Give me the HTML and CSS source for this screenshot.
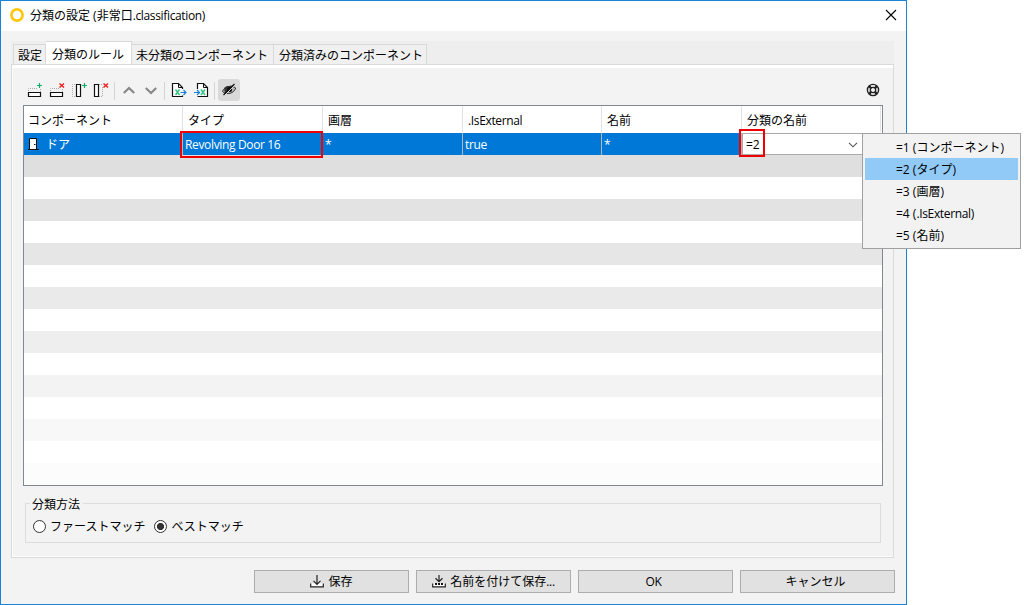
FILE: index.html
```html
<!DOCTYPE html>
<html lang="ja">
  <head>
    <meta charset="UTF-8" />
    <meta name="viewport" content="width=device-width, initial-scale=1.0" />
    <title>分類の設定</title>
    <link rel="stylesheet" href="styles.css">
  </head>
  <body>
    <div class="dialog">
      <div class="titlebar">
        <svg class="logo" width="14" height="14" viewBox="0 0 14 14"><circle cx="7" cy="7" r="5.6" fill="none" stroke="#fdc70c" stroke-width="2.6" /></svg>
        <span class="title">分類の設定 (非常口<span class="latin">.classification)</span></span>
        <svg class="close" width="12" height="12" viewBox="0 0 12 12"><path d="M1 1l10 10M11 1L1 11" stroke="#000" stroke-width="1.1" /></svg>
      </div>

      <div class="tabs">
        <div class="tab tab-first">設定</div>
        <div class="tab active">分類のルール</div>
        <div class="tab tab-unclassified">未分類のコンポーネント</div>
        <div class="tab tab-classified">分類済みのコンポーネント</div>
      </div>

      <div class="panel">
        <div class="toolbar">
          <!-- 行の追加・削除 -->
          <svg class="tool" viewBox="0 0 22 22">
            <path d="M4.5 12V9.5H13M16.5 10v3" fill="none" stroke="#aaa" stroke-dasharray="1 1" />
            <path d="M4.5 13.5h12v4h-12z" fill="#fff" stroke="#111" stroke-width="1.2" />
            <path d="M13 6.5h5M15.5 4v5" stroke="#0fae68" stroke-width="1.2" />
          </svg>
          <svg class="tool" viewBox="0 0 22 22">
            <path d="M4.5 12V9.5H13M16.5 10v3" fill="none" stroke="#aaa" stroke-dasharray="1 1" />
            <path d="M4.5 13.5h12v4h-12z" fill="#fff" stroke="#111" stroke-width="1.2" />
            <path d="M13.5 4.5l4.5 4M18 4.5l-4.5 4" stroke="#f01c1c" stroke-width="1.4" />
          </svg>
          <!-- 列の追加・削除 -->
          <svg class="tool" viewBox="0 0 22 22">
            <path d="M7 5.5H4.5V17.5H7" fill="none" stroke="#aaa" stroke-dasharray="1 1" />
            <path d="M8.5 5.5h4v12h-4z" fill="#fff" stroke="#111" stroke-width="1.2" />
            <path d="M14 6.5h5M16.5 4v5" stroke="#0fae68" stroke-width="1.2" />
          </svg>
          <svg class="tool" viewBox="0 0 22 22">
            <path d="M9 5.5h4M12.5 8V17.5H9" fill="none" stroke="#aaa" stroke-dasharray="1 1" />
            <path d="M4.5 5.5h4v12h-4z" fill="#fff" stroke="#111" stroke-width="1.2" />
            <path d="M13.5 4.5l4.5 4M18 4.5l-4.5 4" stroke="#f01c1c" stroke-width="1.4" />
          </svg>
          <span class="sep"></span>
          <svg class="tool" viewBox="0 0 22 22"><path d="M5.8 14l5.200-5 5.200 5" fill="none" stroke="#888" stroke-width="2.2" /></svg>
          <svg class="tool" viewBox="0 0 22 22"><path d="M5.8 9l5.200 5 5.200-5" fill="none" stroke="#888" stroke-width="2.2" /></svg>
          <span class="sep"></span>
          <!-- エクスポート・インポート -->
          <svg class="tool" viewBox="0 0 22 22">
            <path d="M4.5 4.5h6l4 4V17.5h-10z" fill="#fff" stroke="#111" stroke-width="1.2" />
            <path d="M10.5 4.5v4h4" fill="none" stroke="#111" />
            <path d="M8 10h11v6.500H8z" fill="#f6f6f6" />
            <path d="M7.5 10.5l4 5.500M11.5 10.5l-4 5.500" stroke="#2fc583" stroke-width="1.4" />
            <path d="M12.5 13.5h5.500M15.5 11l2.500 2.5L15.5 16" fill="none" stroke="#1880d8" stroke-width="1.2" />
          </svg>
          <svg class="tool" viewBox="0 0 22 22">
            <path d="M7.5 10V4.5h6l4 4V17.5h-10" fill="#fff" stroke="#111" stroke-width="1.2" />
            <path d="M13.5 4.5v4h4" fill="none" stroke="#111" />
            <path d="M5 10h10v6.500H5z" fill="#f6f6f6" />
            <path d="M11 10.5l4 5.500M15 10.5l-4 5.500" stroke="#2fc583" stroke-width="1.4" />
            <path d="M4 13.5h5.500M7 11l2.500 2.5L7 16" fill="none" stroke="#1880d8" stroke-width="1.2" />
          </svg>
          <span class="sep"></span>
          <svg class="tool pressed" viewBox="0 0 22 22">
            <path d="M4.500 12.500c1.500-5 9-7 13.200-3.500-1.500 5.500-9 7.500-13.200 3.500z" fill="#bbb" stroke="#333" />
            <path d="M6 9l2.500-1.800L16 6.500 8 14.500c-2-1-1.500-4-2-5.500z" fill="#333" />
            <circle cx="11.500" cy="10.500" r="2.600" fill="#111" />
            <path d="M6.500 16.500l11-11" stroke="#e4e4e4" />
            <path d="M5.500 16l11-11" stroke="#111" stroke-width="1.2" />
          </svg>
          <svg class="help" width="14" height="14" viewBox="0 0 14 14">
            <circle cx="7" cy="7" r="5.6" fill="none" stroke="#222" stroke-width="1.4" />
            <circle cx="7" cy="7" r="2.7" fill="none" stroke="#222" stroke-width="1.3" />
            <path d="M3 3l2.300 2.300M11 3L8.700 5.300M3 11l2.300-2.300M11 11L8.700 8.700" stroke="#222" stroke-width="2.400" />
          </svg>
        </div>

        <div class="table">
          <div class="row header">
            <div>コンポーネント</div>
            <div>タイプ</div>
            <div>画層</div>
            <div><span class="latin">.IsExternal</span></div>
            <div>名前</div>
            <div>分類の名前</div>
          </div>
          <div class="row selected">
            <div class="name">
              <svg width="12" height="14" viewBox="0 0 12 14">
                <path d="M1.5 12.500V1.500h7v11" fill="#fff" stroke="#111" />
                <path d="M0 12.500h11M6 7.500h1.500" stroke="#111" />
              </svg>
              <span>ドア</span>
            </div>
            <div class="type"><span class="latin">Revolving Door 16</span><span class="mark mark-type"></span></div>
            <div>*</div>
            <div><span class="latin">true</span></div>
            <div>*</div>
            <div class="combo">
              <span>=2</span>
              <svg width="10" height="6" viewBox="0 0 10 6"><path d="M1 .8l4 4 4-4" fill="none" stroke="#555" stroke-width="1.1" /></svg>
              <span class="mark mark-combo"></span>
            </div>
          </div>
          <div class="stripe s1"></div>
          <div class="stripe"></div>
          <div class="stripe s2"></div>
          <div class="stripe"></div>
          <div class="stripe s3"></div>
          <div class="stripe"></div>
          <div class="stripe s4"></div>
          <div class="stripe"></div>
          <div class="stripe s5"></div>
          <div class="stripe"></div>
          <div class="stripe s6"></div>
          <div class="stripe"></div>
          <div class="stripe s7"></div>
          <div class="stripe"></div>
          <div class="stripe s8"></div>
        </div>

        <div class="method">
          <span class="legend">分類方法</span>
          <label class="option"><i class="radio"></i>ファーストマッチ</label>
          <label class="option"><i class="radio checked"></i>ベストマッチ</label>
        </div>
      </div>

      <div class="buttons">
        <button>
          <svg width="14" height="13" viewBox="0 0 14 13">
            <path d="M.7 8.500v3.300h12.600V8.500" fill="#fff" stroke="#222" stroke-width="1.2" />
            <path d="M7 0v9M3.500 5.800L7 9.300l3.500-3.500" fill="none" stroke="#222" stroke-width="1.2" />
          </svg>
          保存
        </button>
        <button>
          <svg width="14" height="13" viewBox="0 0 14 13">
            <path d="M.7 8.500v3.300h12.600V8.500" fill="#fff" stroke="#222" stroke-width="1.2" />
            <path d="M7 0v6M3.500 3.300L7 6.600l3.500-3.300" fill="none" stroke="#222" stroke-width="1.2" />
            <path d="M3 9h2M6 9h2M9 9h2" stroke="#111" stroke-width="2" />
          </svg>
          名前を付けて保存<span class="latin">...</span>
        </button>
        <button class="plain latin">OK</button>
        <button class="plain">キャンセル</button>
      </div>
    </div>

    <!-- 分類の名前のドロップダウン -->
    <div class="menu">
      <div class="item">=1 (コンポーネント)</div>
      <div class="item current">=2 (タイプ)</div>
      <div class="item">=3 (画層)</div>
      <div class="item">=4 (<span class="latin">.IsExternal</span>)</div>
      <div class="item">=5 (名前)</div>
    </div>
  </body>
</html>
```
FILE: styles.css
```css
* {
  box-sizing: border-box;
}
body {
  margin: 0;
  height: 605px;
  overflow: hidden;
  position: relative;
  background: #fff;
  color: #000;
  font: 12px/16px "Open Sans", "Noto Sans CJK JP", sans-serif;
  white-space: nowrap;
}
svg {
  display: block;
  flex: none;
}
.latin {
  letter-spacing: -0.35px;
}
.dialog {
  width: 907px;
  height: 605px;
  border: 1px solid #1883d7;
  background: #f3f3f3;
  display: flex;
  flex-direction: column;
}
.titlebar {
  height: 30px;
  display: flex;
  align-items: center;
  padding: 0 9px 2px;
  background: #fff;
}
.title {
  margin-left: 6px;
  padding-top: 2px;
  flex: 1;
}
/* タブ */
.tabs {
  margin: 10px 12px 0 10px;
  height: 23px;
  padding-left: 2px;
  display: flex;
  align-items: flex-end;
  background: #eee;
}
.tab {
  height: 20px;
  border: 1px solid #d9d9d9;
  border-width: 1px 1px 0 0;
  background: #f0f0f0;
  padding: 3px 0 0 4px;
}
.tab-first {
  width: 33px;
  border-left-width: 1px;
}
.tab.active {
  width: 86px;
  height: 24px;
  margin-bottom: -1px;
  padding: 5px 0 0 6px;
  background: #fff;
}
.tab-unclassified {
  width: 142px;
}
.tab-classified {
  width: 153px;
  padding-left: 5px;
}
.panel {
  margin: 0 12px 0 10px;
  height: 494px;
  border: 1px solid #d9d9d9;
  box-shadow: inset 1px 3px 0 #fff, inset 0 -1px 0 #fff;
  padding: 14px 10px 0 12px;
}
/* ツールバー */
.toolbar {
  height: 26px;
  display: flex;
}
.tool {
  width: 22px;
  height: 22px;
}
.sep {
  width: 1px;
  height: 18px;
  margin: 3px 3px 0 2px;
  background: #d4d4d4;
}
.pressed {
  background: #d9d9d9;
  border-radius: 3px;
}
.help {
  margin: 4px 3px 0 auto;
}
/* ルールの表 */
.table {
  width: 860px;
  height: 381px;
  margin-left: -1px;
  border: 1px solid #828790;
  background: #fff;
}
.row {
  display: grid;
  grid-template-columns: 159px 140px 140px 139px 140px 139px;
}
.header {
  height: 27px;
}
.header > div {
  border-right: 1px solid #e2e2e2;
  padding: 7px 0 0 5px;
  height: 26px;
}
.header > div:first-child {
  padding-left: 4px;
}
.selected {
  height: 22px;
  background: #0078d7;
  color: #fff;
}
.selected > div {
  border-right: 1px solid #b5b5b5;
  padding: 4px 0 0 2px;
}
.selected .name {
  display: flex;
  align-items: center;
  gap: 6px;
  padding: 0 0 0 4px;
}
.name span {
  padding-top: 2px;
}
.type {
  position: relative;
}
.selected .combo {
  position: relative;
  display: flex;
  justify-content: space-between;
  align-items: center;
  width: 140px;
  height: 22px;
  padding: 1px 24px 0 3px;
  border: 1px solid #aaa;
  border-right: 0;
  background: #fff;
  color: #000;
}
/* 赤枠 */
.mark {
  position: absolute;
  border: 2px solid #f00000;
}
.mark-type {
  left: -3px;
  top: -2px;
  width: 143px;
  height: 27px;
}
.mark-combo {
  left: -4px;
  top: -5px;
  width: 26px;
  height: 28px;
}
.stripe {
  height: 22px;
}
.s1 { background: #dfdfdf; }
.s2 { background: #e3e3e3; }
.s3 { background: #e6e6e6; }
.s4 { background: #eaeaea; }
.s5 { background: #eeeeee; }
.s6 { background: #f3f3f3; }
.s7 { background: #f8f8f8; }
.s8 { background: #fcfcfc; }
/* 分類方法 */
.method {
  position: relative;
  width: 856px;
  height: 40px;
  margin: 17px 0 0 1px;
  border: 1px solid #dcdcdc;
  padding: 15px 0 0 7px;
  display: flex;
  gap: 8px;
}
.legend {
  position: absolute;
  left: 4px;
  top: -7px;
  padding: 0 3px 0 2px;
  background: #f3f3f3;
}
.option {
  display: flex;
  align-items: center;
  gap: 4px;
  height: 16px;
}
.option + .option {
  margin-left: 1px;
}
.radio {
  width: 13px;
  height: 13px;
  margin-top: -1px;
  border: 1px solid #333;
  border-radius: 50%;
  background: #fff;
}
.radio.checked {
  background: radial-gradient(circle, #333 3.2px, #fff 3.9px);
}
/* 下部のボタン */
.buttons {
  display: flex;
  justify-content: flex-end;
  gap: 7px;
  padding: 12px 11px 0 0;
}
button {
  width: 155px;
  height: 23px;
  padding: 0;
  border: 1px solid #adadad;
  background: #e1e1e1;
  color: #000;
  font: inherit;
  display: flex;
  align-items: center;
  justify-content: center;
}
button.plain {
  padding: 1px 4px 0 0;
}
button svg {
  margin-right: 4px;
}
/* ドロップダウン */
.menu {
  position: absolute;
  left: 862px;
  top: 133px;
  width: 159px;
  height: 116px;
  border: 1px solid #a0a0a0;
  background: #f2f2f2;
  padding: 2px;
}
.item {
  height: 22px;
  padding: 4px 0 0 31px;
}
.item.current {
  background: #91c9f7;
}
```
